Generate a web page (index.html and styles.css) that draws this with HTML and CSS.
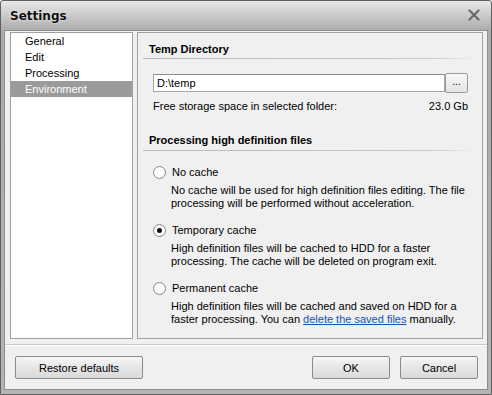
FILE: index.html
```html
<!DOCTYPE html>
<html lang="en">
<head>
  <meta charset="UTF-8">
  <title>Settings</title>
  <link rel="stylesheet" href="styles.css">
</head>
<body>
  <div class="window">
    <div class="titlebar">
      <span class="title">Settings</span>
      <svg class="close" width="12" height="12" viewBox="0 0 12 12">
        <path d="M1.5 1.5 L10.5 10.5 M10.5 1.5 L1.5 10.5" stroke="#6a6a6a" stroke-width="2.2" stroke-linecap="round"/>
      </svg>
    </div>

    <div class="client">
      <div class="main">
        <ul class="nav-list">
          <li>General</li>
          <li>Edit</li>
          <li>Processing</li>
          <li class="active">Environment</li>
        </ul>

        <div class="panel">
          <h2 class="group-title">Temp Directory</h2>
          <div class="path-row">
            <input type="text" class="path-input" value="D:\temp">
            <button class="browse">...</button>
          </div>
          <div class="space-row">
            <span>Free storage space in selected folder:</span>
            <span>23.0 Gb</span>
          </div>

          <h2 class="group-title second">Processing high definition files</h2>

          <div class="option">
            <label class="radio-label"><span class="radio"></span>No cache</label>
            <p class="desc">No cache will be used for high definition files editing. The file processing will be performed without acceleration.</p>
          </div>
          <div class="option">
            <label class="radio-label"><span class="radio checked"></span>Temporary cache</label>
            <p class="desc">High definition files will be cached to HDD for a faster processing. The cache will be deleted on program exit.</p>
          </div>
          <div class="option">
            <label class="radio-label"><span class="radio"></span>Permanent cache</label>
            <p class="desc">
              <span>High definition files will be cached and saved on HDD for a</span><br>
              <span>faster processing. You can</span> <a href="#">delete the saved files</a> <span>manually.</span>
            </p>
          </div>
        </div>
      </div>

      <div class="footer">
        <button class="btn wide">Restore defaults</button>
        <div class="footer-right">
          <button class="btn">OK</button>
          <button class="btn">Cancel</button>
        </div>
      </div>
    </div>
  </div>
</body>
</html>
```

FILE: styles.css
```css
body {
  margin: 0;
  font-family: "Liberation Sans", Arial, sans-serif;
  font-size: 11px;
  color: #000;
}

.window {
  width: 492px;
  height: 395px;
  box-sizing: border-box;
  border: 1px solid #606060;
  border-radius: 3px 3px 0 0;
  background: linear-gradient(#e8e8e8, #aaaaaa 30px, #b4b4b4);
  padding: 0 3px 4px;
  display: flex;
  flex-direction: column;
}

.titlebar {
  height: 29px;
  display: flex;
  align-items: center;
  justify-content: space-between;
  padding: 0 8px 0 6px;
  flex-shrink: 0;
}

.title {
  font-family: "DejaVu Sans", Verdana, sans-serif;
  font-weight: bold;
  font-size: 12px;
  color: #101010;
  text-shadow: 0 0 3px #f4f4f4;
}

.close {
  margin-top: -1px;
}

.client {
  flex: 1;
  background: #f0f0f0;
  border: 1px solid #8e8e8e;
  display: flex;
  flex-direction: column;
}

.main {
  flex: 1;
  display: flex;
  gap: 4px;
  padding: 1px 4px 5px 5px;
  border-bottom: 1px solid #c9c9c9;
}

.nav-list {
  list-style: none;
  margin: 0;
  padding: 0;
  width: 121px;
  background: #fff;
  border: 1px solid #a0a0a0;
}

.nav-list li {
  height: 16px;
  line-height: 16px;
  padding-left: 14px;
}

.nav-list li.active {
  background: #9b9b9b;
  color: #fff;
}

.panel {
  flex: 1;
  border: 1px solid #a0a0a0;
  padding: 0 5px 0 5px;
}

.group-title {
  margin: 0;
  font-size: 11px;
  font-weight: bold;
  padding: 10px 0 0 6px;
  height: 15px;
  border-bottom: 1px solid;
  border-image: linear-gradient(to right, #b9b9b9, #c8c8c8 85%, #f0f0f0) 1;
}

.group-title.second {
  margin-top: 14px;
  padding-top: 8px;
  height: 16px;
}

.path-row {
  display: flex;
  margin: 14px 9px 0 10px;
}

.path-input {
  flex: 1;
  height: 18px;
  box-sizing: border-box;
  border: 1px solid #a6a6a6;
  border-top-color: #8d8d8d;
  padding: 0 3px;
  font-family: inherit;
  font-size: 11px;
  margin-top: 1px;
}

.browse {
  width: 23px;
  height: 20px;
  border: 1px solid #9a9a9a;
  border-radius: 2px;
  background: linear-gradient(#f7f7f7, #e4e4e4);
  font-family: inherit;
  font-size: 10px;
  padding: 0 0 3px;
}

.space-row {
  display: flex;
  justify-content: space-between;
  margin: 7px 9px 0 10px;
}

.option {
  margin-top: 14px;
  padding-left: 10px;
}

.option + .option {
  margin-top: 13px;
}

.radio-label {
  display: flex;
  align-items: center;
  height: 14px;
}

.radio {
  width: 11px;
  height: 11px;
  border: 1px solid #8b8b8b;
  border-radius: 50%;
  background: radial-gradient(#ffffff 50%, #ececec);
  margin-right: 6px;
  position: relative;
}

.radio.checked::after {
  content: "";
  position: absolute;
  left: 3px;
  top: 3px;
  width: 5px;
  height: 5px;
  border-radius: 50%;
  background: #111;
}

.desc {
  margin: 5px 0 0 18px;
  line-height: 13px;
  width: 296px;
}

.desc a {
  color: #1a4fb4;
}

.footer {
  height: 43px;
  display: flex;
  align-items: center;
  justify-content: space-between;
  padding: 0 9px 0 10px;
  border-top: 1px solid #fbfbfb;
}

.footer-right {
  display: flex;
  gap: 10px;
}

.btn {
  width: 78px;
  height: 23px;
  border: 1px solid #8a8a8a;
  border-radius: 2px;
  background: linear-gradient(#f6f6f6, #e6e6e6 50%, #dadada);
  font-family: inherit;
  font-size: 11px;
  color: #000;
}

.btn.wide {
  width: 128px;
}
```
